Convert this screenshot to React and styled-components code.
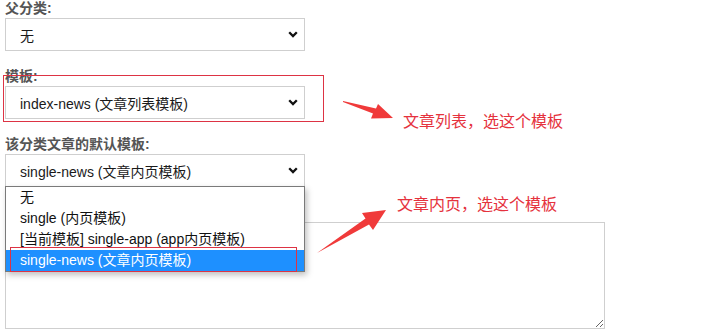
import React from "react";
import styled, { createGlobalStyle } from "styled-components";

const GlobalStyle = createGlobalStyle`
  html, body {
    margin: 0;
    padding: 0;
    background: #ffffff;
  }
  body {
    font-family: "Liberation Sans", "Noto Sans CJK SC", sans-serif;
  }
`;

const Page = styled.div`
  position: relative;
  width: 709px;
  height: 335px;
  padding: 0 5px;
  box-sizing: border-box;
  overflow: hidden;
`;

const Field = styled.div`
  position: relative;
  display: flex;
  flex-direction: column;
  margin-bottom: 17px;
  padding-top: ${(p) => (p.$bare ? "18px" : "0")};
`;

const Label = styled.label`
  display: block;
  height: 18px;
  line-height: 16px;
  font-size: 14px;
  font-weight: 600;
  color: #555;
`;

const SelectBox = styled.div`
  position: relative;
  display: flex;
  align-items: center;
  justify-content: space-between;
  box-sizing: border-box;
  width: 300px;
  height: 33px;
  padding: 0 6px 0 14px;
  border: 1px solid #cfcfcf;
  background: #fff;
  font-size: 14px;
  color: #1a1a1a;
`;

const Chevron = () => (
  <svg width="10" height="7" viewBox="0 0 10 7">
    <path d="M1.2 1.2 L5 5 L8.8 1.2" fill="none" stroke="#111" strokeWidth="2.3" />
  </svg>
);

const Dropdown = styled.ul`
  position: absolute;
  top: 100%;
  left: -1px;
  z-index: 3;
  width: 300px;
  margin: 0;
  padding: 0;
  list-style: none;
  box-sizing: border-box;
  background: #fff;
  border: 1px solid #7a7a7a;
  box-shadow: 2px 3px 6px rgba(0, 0, 0, 0.25);
`;

const Option = styled.li`
  height: 21px;
  line-height: 21px;
  padding-left: 14px;
  font-size: 14px;
  color: ${(p) => (p.$active ? "#fff" : "#111")};
  background: ${(p) => (p.$active ? "#1e90ff" : "transparent")};
`;

const TextArea = styled.textarea`
  display: block;
  box-sizing: border-box;
  width: 600px;
  height: 107px;
  margin: 0;
  border: 1px solid #cfcfcf;
  font-family: inherit;
  font-size: 14px;
`;

const Frame = styled.div`
  position: absolute;
  left: ${(p) => p.$x}px;
  top: ${(p) => p.$y}px;
  width: ${(p) => p.$w}px;
  height: ${(p) => p.$h}px;
  border: 1px solid #dd3344;
  box-sizing: border-box;
  z-index: 4;
  pointer-events: none;
`;

const Note = styled.div`
  position: absolute;
  left: ${(p) => p.$x}px;
  top: ${(p) => p.$y}px;
  font-size: 16px;
  line-height: 20px;
  color: #e5323d;
  white-space: nowrap;
`;

const ArrowSvg = styled.svg`
  position: absolute;
  left: ${(p) => p.$x}px;
  top: ${(p) => p.$y}px;
  z-index: 4;
`;

const Select = ({ value, children }) => (
  <SelectBox>
    <span>{value}</span>
    <Chevron />
    {children}
  </SelectBox>
);

const templateOptions = [
  "无",
  "single (内页模板)",
  "[当前模板] single-app (app内页模板)",
  "single-news (文章内页模板)",
];

export default function App() {
  return (
    <>
      <GlobalStyle />
      <Page>
        <Field>
          <Label>父分类:</Label>
          <Select value="无" />
        </Field>
        <Field>
          <Label>模板:</Label>
          <Select value="index-news (文章列表模板)" />
        </Field>
        <Field>
          <Label>该分类文章的默认模板:</Label>
          <Select value="single-news (文章内页模板)">
            <Dropdown>
              {templateOptions.map((opt, i) => (
                <Option key={i} $active={i === templateOptions.length - 1}>
                  {opt}
                </Option>
              ))}
            </Dropdown>
          </Select>
        </Field>
        <Field $bare>
          <TextArea />
        </Field>

        <Frame $x={3} $y={75} $w={321} $h={47} />
        <Frame $x={10} $y={247} $w={287} $h={25} />

        <ArrowSvg $x={340} $y={95} width="56" height="28" viewBox="0 0 56 28">
          <polygon points="3,6 36,13.5 38,9 53,23 31,23.5 33,18.5 3,7" fill="#f03a3a" />
        </ArrowSvg>
        <Note $x={403} $y={112}>文章列表，选这个模板</Note>

        <ArrowSvg $x={310} $y={200} width="80" height="60" viewBox="0 0 80 60">
          <polygon points="76,10 63,30 59,24.5 7,53 55.5,18.5 52,13" fill="#f03a3a" />
        </ArrowSvg>
        <Note $x={397} $y={195}>文章内页，选这个模板</Note>
      </Page>
    </>
  );
}
